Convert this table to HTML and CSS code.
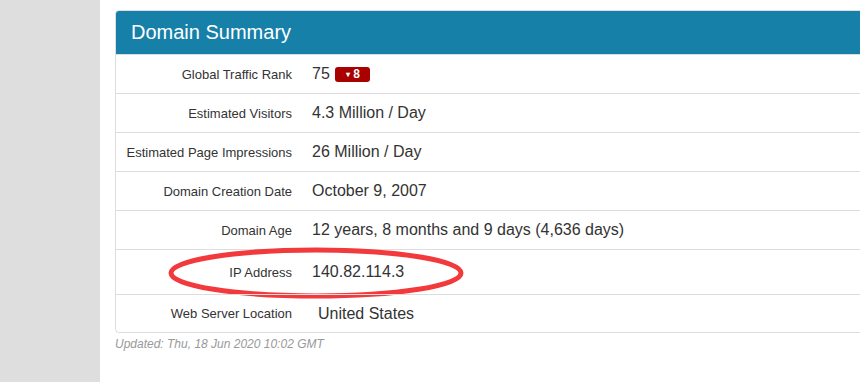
FILE: index.html
```html
<!DOCTYPE html>
<html>
<head>
<meta charset="utf-8">
<link rel="stylesheet" href="styles.css">
</head>
<body>
<div class="page">
  <aside class="sidebar"></aside>
  <main class="main">
    <section class="panel">
      <h2 class="panel-title">Domain Summary</h2>
      <div class="row">
        <div class="label">Global Traffic Rank</div>
        <div class="value">75 <span class="badge"><span class="arrow">&#9662;</span>8</span></div>
      </div>
      <div class="row">
        <div class="label">Estimated Visitors</div>
        <div class="value">4.3 Million / Day</div>
      </div>
      <div class="row">
        <div class="label">Estimated Page Impressions</div>
        <div class="value">26 Million / Day</div>
      </div>
      <div class="row">
        <div class="label">Domain Creation Date</div>
        <div class="value">October 9, 2007</div>
      </div>
      <div class="row">
        <div class="label">Domain Age</div>
        <div class="value">12 years, 8 months and 9 days (4,636 days)</div>
      </div>
      <div class="row row-tall">
        <div class="label">IP Address</div>
        <div class="value">140.82.114.3</div>
        <svg class="circle" width="300" height="54" viewBox="0 0 300 54"><ellipse cx="150" cy="27" rx="145" ry="23" fill="none" stroke="#f2393b" stroke-width="5"/></svg>
      </div>
      <div class="row row-last">
        <div class="label">Web Server Location</div>
        <div class="value value-loc">United States</div>
      </div>
    </section>
    <p class="updated">Updated: Thu, 18 Jun 2020 10:02 GMT</p>
  </main>
</div>
</body>
</html>
```
FILE: styles.css
```css
html, body {
  margin: 0;
  padding: 0;
  background: #fff;
  overflow: hidden;
}
body {
  font-family: "Liberation Sans", Arial, sans-serif;
  color: #333;
}
.page {
  display: flex;
  width: 860px;
  height: 382px;
}
.sidebar {
  width: 100px;
  flex: none;
  background: #dedede;
}
.main {
  padding: 10px 0 0 15px;
  flex: none;
  width: 780px;
}
.panel {
  border: 1px solid #ddd;
  border-radius: 4px;
  width: 780px;
}
.panel-title {
  margin: 0;
  height: 43px;
  line-height: 43px;
  background: #1780a9;
  color: #fff;
  font-weight: normal;
  font-size: 20px;
  padding-left: 15px;
  border-radius: 3px 3px 0 0;
}
.row {
  position: relative;
  display: flex;
  align-items: center;
  height: 38px;
  border-top: 1px solid #ddd;
}
.row-tall {
  height: 44px;
}
.row-last {
  height: 37px;
}
.label {
  width: 176px;
  text-align: right;
  font-size: 13px;
  color: #333;
}
.value {
  padding-left: 20px;
  font-size: 16px;
  color: #333;
}
.value-loc {
  padding-left: 26px;
}
.badge {
  display: inline-block;
  background: #a90000;
  color: #fff;
  font-size: 12px;
  font-weight: bold;
  line-height: 15px;
  height: 15px;
  padding: 0 10px 0 11px;
  border-radius: 3px;
  vertical-align: 1px;
  margin-left: 1px;
}
.arrow {
  font-size: 8px;
  margin-right: 3px;
  vertical-align: 1px;
}
.circle {
  position: absolute;
  left: 50px;
  top: -4px;
}
.updated {
  margin: 4px 0 0 0;
  font-size: 12px;
  font-style: italic;
  color: #999;
}
```
